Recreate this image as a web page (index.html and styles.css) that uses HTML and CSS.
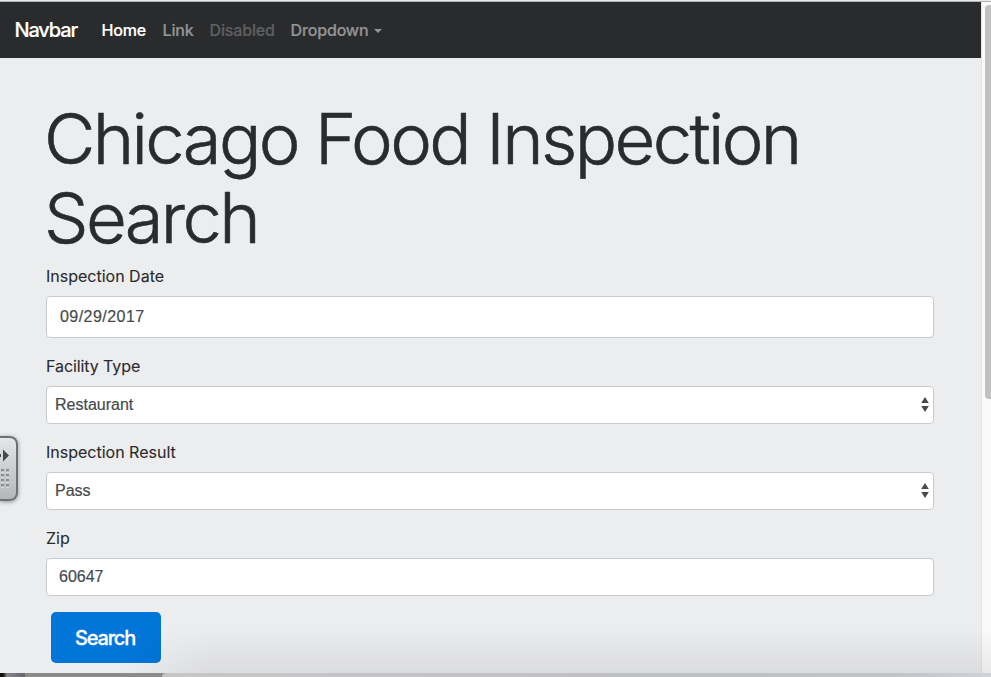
FILE: index.html
```html
<!DOCTYPE html>
<html lang="en">
<head>
<meta charset="utf-8">
<title>Chicago Food Inspection Search</title>
<link rel="stylesheet" href="styles.css">
</head>
<body>
<div class="chrome-edge"></div>
<div class="viewport">
  <div class="page">
    <nav class="navbar">
      <a class="brand">Navbar</a>
      <a class="nav-link active">Home</a>
      <a class="nav-link link">Link</a>
      <a class="nav-link disabled">Disabled</a>
      <a class="nav-link dropdown">Dropdown</a>
      <span class="caret"></span>
    </nav>
    <main class="content">
      <h1>Chicago Food Inspection<br>Search</h1>
      <div class="group">
        <div class="label">Inspection Date</div>
        <div class="control date"><span>09/29/2017</span></div>
      </div>
      <div class="group">
        <div class="label type">Facility Type</div>
        <div class="control select"><span>Restaurant</span>
          <svg class="arrows" width="8" height="15" viewBox="0 0 8 15"><path d="M4 0 7.8 6H.2zM.2 9h7.6L4 15z"/></svg>
        </div>
      </div>
      <div class="group">
        <div class="label">Inspection Result</div>
        <div class="control select"><span>Pass</span>
          <svg class="arrows" width="8" height="15" viewBox="0 0 8 15"><path d="M4 0 7.8 6H.2zM.2 9h7.6L4 15z"/></svg>
        </div>
      </div>
      <div class="group">
        <div class="label">Zip</div>
        <div class="control"><span>60647</span></div>
      </div>
      <div class="button"><span>Search</span></div>
    </main>
  </div>
  <div class="scrollbar"><div class="thumb"></div></div>
</div>
<div class="desktop"><div class="dark"></div><div class="mid"></div><div class="light"></div></div>
<div class="shade"></div>
<div class="handle">
  <svg width="17" height="62" viewBox="0 0 17 62"><path d="M0 16h1v3H0zM3 11.500 9 17.500 3 23.500z" fill="#48484a"/><g fill="#8b8d90"><path d="M1 31h3v3H1zM6 31h3v3H6zM1 36h3v3H1zM6 36h3v3H6zM1 41h3v3H1zM6 41h3v3H6zM1 46h3v3H1zM6 46h3v3H6z"/></g><path d="M1 34h3M6 34h3M1 39h3M6 39h3M1 44h3M6 44h3M1 49h3M6 49h3" stroke="#eee"/></svg>
</div>
</body>
</html>
```

FILE: styles.css
```css
* { box-sizing: border-box; }
body {
  margin: 0;
  width: 991px;
  height: 677px;
  overflow: hidden;
  position: relative;
  background: #ecedef;
  color: #292b2c;
  font: 16px/24px Inter, "Liberation Sans", sans-serif;
}
.chrome-edge { height: 2px; background: #e9eaeb; border-bottom: 1px solid #b0b2b3; }
.viewport { display: flex; height: 671px; }
.page { width: 981px; overflow: hidden; }
.navbar {
  display: flex;
  align-items: center;
  height: 56px;
  padding-left: 14.5px;
  background: #292b2c;
  font-weight: 500;
  color: #949596;
}
.navbar a { white-space: nowrap; -webkit-text-stroke: .2px currentColor; }
.brand { width: 87px; font-size: 20px; color: #fff; letter-spacing: -1.15px; }
.active { width: 61px; color: #fff; }
.link { width: 47px; }
.disabled { width: 81px; color: #5f6061; }
.nav-link { letter-spacing: -.15px; }
.caret {
  margin: 2px 0 0 5px;
  border: 4.5px solid transparent;
  border-top-color: #949596;
  border-bottom: 0;
}
.navbar .dropdown { width: 78px; }
.content { padding: 41px 47px 0 46px; }
h1 {
  margin: 0 0 7px -2px;
  font-size: 70.5px;
  font-weight: 300;
  line-height: 79.2px;
  white-space: nowrap;
  letter-spacing: -2.65px;
  -webkit-text-stroke: .6px #292b2c;
}
.group { margin-bottom: 16px; }
.label { height: 24px; margin-bottom: 8px; -webkit-text-stroke: .1px #292b2c; }
.type { letter-spacing: -.08px; }
.control {
  display: flex;
  align-items: center;
  height: 38px;
  padding: 0 12px;
  border: 1px solid #c9cacb;
  border-radius: 4px;
  background: #fff;
  color: #464a4c;
  font-family: "Liberation Sans", sans-serif;
}
.control span { -webkit-text-stroke: .2px #464a4c; }
.date { height: 42px; padding-left: 13px; letter-spacing: .45px; }
.select { justify-content: space-between; padding: 0 4px 0 8px; }
.arrows { fill: #464a4c; margin-top: -1px; }
.button {
  display: flex;
  align-items: center;
  justify-content: center;
  width: 110px;
  height: 51px;
  margin-left: 5px;
  padding-right: 2px;
  border-radius: 5px;
  background: #0275d8;
  color: #fff;
  font-size: 20px;
  font-weight: 500;
  letter-spacing: -1.15px;
  -webkit-text-stroke: .3px #fff;
}
.scrollbar { width: 10px; padding: 3px 0 0 3px; background: #fafafa; border-left: 1px solid #e5e5e6; }
.thumb { height: 394px; border-radius: 4px 0 0 4px; background: #c1c1c1; }
.desktop { display: flex; height: 4px; background: #868485; }
.dark { width: 25px; background: linear-gradient(90deg, #111 3px, #85858b 7px, #66666b); }
.mid { width: 137px; background: #8c8a8b; }
.light { flex: 1; border-radius: 4px 0 0; background: linear-gradient(90deg, #c7c5c6, #bfc0c4 60%, #c1c2c6 88%, #d2d3da); }
.shade {
  position: absolute;
  left: 120px;
  right: 0;
  bottom: 4px;
  height: 45px;
  background: linear-gradient(transparent, rgba(0, 0, 0, .07));
  -webkit-mask-image: linear-gradient(90deg, transparent, #000 90px);
  mask-image: linear-gradient(90deg, transparent, #000 90px);
}
.handle {
  position: absolute;
  left: 0;
  top: 436px;
  width: 18px;
  height: 65px;
  border: 2px solid #6f7173;
  border-left: 0;
  border-radius: 0 8px 8px 0;
  background: linear-gradient(#e5e6e7, #b4b7b9);
  box-shadow: 0 1px 4px rgba(0, 0, 0, .4);
}
```
